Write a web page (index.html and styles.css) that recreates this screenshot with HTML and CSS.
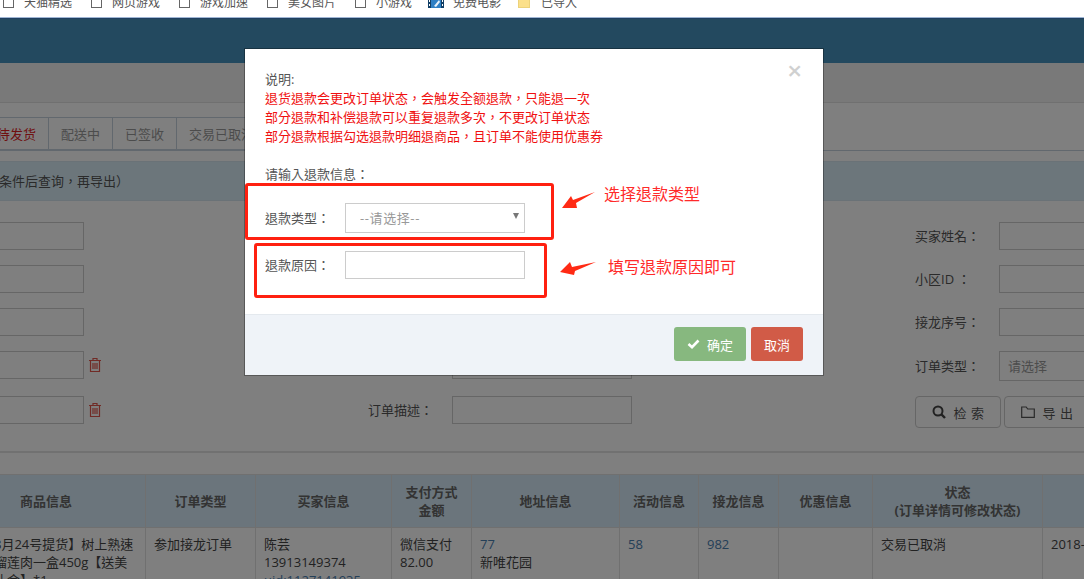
FILE: index.html
```html
<!DOCTYPE html>
<html lang="zh-Hant">

<head>
    <meta charset="UTF-8">
    <title>订单管理</title>
    <link rel="stylesheet" href="styles.css">
</head>

<body>
    <div class="bookmarks">
        <span class="bookmark"><i class="page-icon"></i>天猫精选</span>
        <span class="bookmark"><i class="page-icon"></i>网页游戏</span>
        <span class="bookmark"><i class="page-icon"></i>游戏加速</span>
        <span class="bookmark"><i class="page-icon"></i>美女图片</span>
        <span class="bookmark bookmark-short"><i class="page-icon"></i>小游戏</span>
        <span class="bookmark bookmark-film">
            <svg class="film-icon" width="16" height="9" viewBox="0 0 16 9">
                <rect width="16" height="9" fill="#123f66" />
                <rect x="3" y="0" width="10" height="9" fill="#2d7fc4" />
                <path d="M6 7 L11 1 L12 3 L8 8 Z" fill="#e8f2fa" />
                <path d="M1 1h1v2H1zM1 5h1v2H1zM14 1h1v2h-1zM14 5h1v2h-1z" fill="#fff" />
            </svg>免费电影
        </span>
        <span class="bookmark"><i class="folder-icon"></i>已导入</span>
    </div>

    <div class="app">
        <header class="topbar"></header>
        <div class="breadcrumb"></div>

        <div class="tabs">
            <a class="tab tab-active">待发货</a>
            <a class="tab">配送中</a>
            <a class="tab">已签收</a>
            <a class="tab">交易已取消</a>
        </div>

        <div class="panel-title"><span>（请选择筛选条件后查询，再导出）</span></div>

        <div class="filter">
            <div class="left-field"><input class="field left-input" type="text"></div>
            <label class="field-label"></label>
            <input class="field" type="text">
            <span></span>
            <label class="field-label">买家姓名：</label>
            <input class="field" type="text">

            <div class="left-field"><input class="field left-input" type="text"></div>
            <label class="field-label"></label>
            <input class="field" type="text">
            <span></span>
            <label class="field-label">小区ID ：</label>
            <input class="field" type="text">

            <div class="left-field"><input class="field left-input" type="text"></div>
            <label class="field-label"></label>
            <input class="field" type="text">
            <span></span>
            <label class="field-label">接龙序号：</label>
            <input class="field" type="text">

            <div class="left-field">
                <input class="field left-input" type="text">
                <svg class="trash" width="14" height="16" viewBox="0 0 14 16">
                    <path d="M1 3.5h12M2.5 3.5v11h9v-11M5 3.5V1.5h4v2M5 6v6M7 6v6M9 6v6" fill="none" stroke="#e2574c" stroke-width="1.2" />
                </svg>
            </div>
            <label class="field-label"></label>
            <input class="field" type="text">
            <span></span>
            <label class="field-label field-label-tall">订单类型：</label>
            <input class="field field-tall" type="text" placeholder="请选择">

            <div class="left-field">
                <input class="field left-input" type="text">
                <svg class="trash" width="14" height="16" viewBox="0 0 14 16">
                    <path d="M1 3.5h12M2.5 3.5v11h9v-11M5 3.5V1.5h4v2M5 6v6M7 6v6M9 6v6" fill="none" stroke="#e2574c" stroke-width="1.2" />
                </svg>
            </div>
            <label class="field-label">订单描述：</label>
            <input class="field" type="text">
            <span></span>
            <div class="filter-buttons">
                <button class="btn-plain" type="button">
                    <svg width="14" height="14" viewBox="0 0 14 14">
                        <circle cx="6" cy="6" r="4.5" fill="none" stroke="#444" stroke-width="2" />
                        <path d="M9.2 9.2 L13 13" stroke="#444" stroke-width="2.4" />
                    </svg>
                    检 索
                </button>
                <button class="btn-plain" type="button">
                    <svg width="14" height="12" viewBox="0 0 14 12">
                        <path d="M.7 11.3V1h4.5l1.5 2h6.6v8.3z" fill="none" stroke="#555" stroke-width="1.2" />
                    </svg>
                    导 出
                </button>
            </div>
        </div>

        <div class="table-wrap">
            <table class="orders">
                <colgroup>
                    <col class="c-goods">
                    <col class="c-type">
                    <col class="c-buyer">
                    <col class="c-pay">
                    <col class="c-addr">
                    <col class="c-act">
                    <col class="c-chain">
                    <col class="c-coupon">
                    <col class="c-status">
                    <col class="c-time">
                </colgroup>
                <thead>
                    <tr>
                        <th>商品信息</th>
                        <th>订单类型</th>
                        <th>买家信息</th>
                        <th>支付方式<br>金额</th>
                        <th>地址信息</th>
                        <th>活动信息</th>
                        <th>接龙信息</th>
                        <th>优惠信息</th>
                        <th>状态<br>(订单详情可修改状态)</th>
                        <th>下单时间</th>
                    </tr>
                </thead>
                <tbody>
                    <tr>
                        <td>预售【8月24号提货】树上熟速<br>冻金枕榴莲肉一盒450g【送美<br>食饼干礼金】*1</td>
                        <td>参加接龙订单</td>
                        <td>陈芸<br>13913149374<br><a>uid:1127141935</a></td>
                        <td>微信支付<br>82.00</td>
                        <td><a>77</a><br>新唯花园</td>
                        <td><a>58</a></td>
                        <td><a>982</a></td>
                        <td></td>
                        <td>交易已取消</td>
                        <td>2018-08-20 10:15</td>
                    </tr>
                </tbody>
            </table>
        </div>

        <div class="backdrop"></div>
    </div>

    <div class="modal">
        <div class="modal-body">
            <span class="modal-close">×</span>
            <p class="note">说明:</p>
            <p class="note note-red">退货退款会更改订单状态，会触发全额退款，只能退一次</p>
            <p class="note note-red">部分退款和补偿退款可以重复退款多次，不更改订单状态</p>
            <p class="note note-red">部分退款根据勾选退款明细退商品，且订单不能使用优惠券</p>
            <p class="note note-gap">请输入退款信息：</p>
            <div class="modal-row modal-row-first">
                <label class="modal-label">退款类型：</label>
                <div class="select-wrap">
                    <select class="modal-select">
                        <option>--请选择--</option>
                    </select>
                </div>
            </div>
            <div class="modal-row">
                <label class="modal-label">退款原因：</label>
                <input class="modal-input" type="text">
            </div>
        </div>
        <div class="modal-footer">
            <button class="btn btn-ok" type="button">
                <svg width="13" height="10" viewBox="0 0 13 10">
                    <path d="M1.5 5 L5 8.2 L11.5 1.5" fill="none" stroke="#fff" stroke-width="2.6" />
                </svg>
                确定
            </button>
            <button class="btn btn-cancel" type="button">取消</button>
        </div>
    </div>

    <!-- 红色标注 -->
    <div class="mark mark-type"></div>
    <div class="mark mark-reason"></div>
    <svg class="mark-arrows" width="1084" height="579" viewBox="0 0 1084 579">
        <path d="M562 208 L571 196 L573 200 L595 192 L576 203 L577 208 Z" fill="#ff2a14" />
        <path d="M560 272 L570 262 L572 267 L596 262 L575 271 L574 275 Z" fill="#ff2a14" />
    </svg>
    <span class="mark-text mark-text-type">选择退款类型</span>
    <span class="mark-text mark-text-reason">填写退款原因即可</span>
</body>

</html>
```

FILE: styles.css
```css
* {
    box-sizing: border-box;
}

html,
body {
    height: 100%;
}

body {
    position: relative;
    height: 579px;
    margin: 0;
    overflow: hidden;
    background-color: #fff;
    font-family: "Open Sans", "Noto Sans CJK TC", sans-serif;
    font-size: 13px;
    color: #444;
}

/* 浏览器书签栏 */
.bookmarks {
    display: flex;
    height: 18px;
    padding-left: 3px;
    overflow: hidden;
    background-color: #fff;
    border-bottom: 1px solid #9fb6d4;
    font-size: 12px;
    line-height: 14px;
    color: #555;
}

.bookmark {
    display: flex;
    flex: none;
    width: 88px;
    margin-top: -4px;
    white-space: nowrap;
}

.bookmark-short {
    width: 73px;
}

.bookmark-film {
    width: 90px;
}

.page-icon {
    flex: none;
    width: 11px;
    height: 12px;
    margin-right: 10px;
    background-color: #fff;
    border: 1px solid #666;
}

.film-icon {
    flex: none;
    margin: 3px 9px 0 0;
}

.folder-icon {
    flex: none;
    width: 12px;
    height: 12px;
    margin-right: 11px;
    background-color: #fbe08a;
    border: 1px solid #ecd27a;
}

/* 页面主体 */
.app {
    position: relative;
    height: 561px;
    overflow: hidden;
}

.topbar {
    height: 45px;
    background-color: #4692be;
    border-top: 1px solid #3f7fc0;
}

.breadcrumb {
    height: 40px;
    background-color: #f3f3f3;
    border-bottom: 1px solid #e0e0e0;
}

.tabs {
    display: flex;
    height: 48px;
    margin-left: -15px;
    padding-top: 14px;
    border-bottom: 1px solid #c5d0dc;
}

.tab {
    padding: 0 12px;
    border: 1px solid #c5d0dc;
    border-left: 0;
    line-height: 32px;
    color: #999;
    white-space: nowrap;
}

.tab-active {
    color: #e02020;
}

.panel-title {
    height: 40px;
    margin-top: 10px;
    overflow: hidden;
    background-color: #d9edf7;
    border: 1px solid #d4e4ee;
    border-width: 1px 0;
    line-height: 38px;
    color: #555;
}

.panel-title span {
    margin-left: -79px;
}

.filter {
    display: grid;
    grid-template-columns: 368px 84px 180px 283px 84px 180px;
    row-gap: 15px;
    align-content: start;
    align-items: start;
    height: 252px;
    padding-top: 21px;
    border-bottom: 2px solid #e2e2e2;
}

.left-field {
    display: flex;
    align-items: center;
    height: 28px;
}

.left-input {
    flex: none;
    margin-left: -96px;
}

.trash {
    margin-left: 4px;
}

.field {
    width: 180px;
    height: 28px;
    padding: 0 8px;
    border: 1px solid #ccc;
    background-color: #fff;
    font: inherit;
}

.field-tall {
    height: 30px;
}

.field::placeholder {
    color: #999;
}

.field-label {
    line-height: 28px;
    color: #555;
    white-space: nowrap;
}

.field-label-tall {
    line-height: 30px;
}

.filter-buttons {
    display: flex;
    grid-column: 5 / 7;
    gap: 3px;
}

.btn-plain {
    display: flex;
    flex: none;
    align-items: center;
    justify-content: center;
    gap: 8px;
    width: 86px;
    height: 32px;
    padding: 0;
    background-color: #fff;
    border: 1px solid #ccc;
    border-radius: 4px;
    font: inherit;
    letter-spacing: 0.5px;
    color: #555;
}

.table-wrap {
    margin: 21px 0 0 -54px;
}

.orders {
    width: 1246px;
    table-layout: fixed;
    border-collapse: collapse;
    line-height: 18px;
}

.c-goods { width: 199px; }
.c-type { width: 110px; }
.c-buyer { width: 136px; }
.c-pay { width: 80px; }
.c-addr { width: 148px; }
.c-act { width: 79px; }
.c-chain { width: 80px; }
.c-coupon { width: 94px; }
.c-status { width: 170px; }
.c-time { width: 150px; }

.orders th,
.orders td {
    border: 1px solid #e0e0e0;
}

.orders th {
    height: 53px;
    padding: 0 4px;
    background-color: #d6ebf8;
    text-align: center;
    color: #666;
    white-space: nowrap;
}

.orders td {
    height: 120px;
    padding: 7px 8px;
    vertical-align: top;
    white-space: nowrap;
}

.orders a {
    color: #4a80b0;
}

.backdrop {
    position: absolute;
    top: 0;
    right: 0;
    bottom: 0;
    left: 0;
    background-color: rgba(0, 0, 0, 0.5);
}

/* 退款弹窗 */
.modal {
    position: absolute;
    top: 49px;
    left: 245px;
    width: 578px;
    height: 326px;
    display: flex;
    flex-direction: column;
    background-color: #fff;
    box-shadow: 0 0 0 1px rgba(0, 0, 0, 0.3);
}

.modal-body {
    position: relative;
    flex: 1;
    padding: 21px 20px 0;
}

.modal-close {
    position: absolute;
    top: 6px;
    right: 21px;
    font-size: 26px;
    line-height: 30px;
    font-weight: 600;
    color: #d0d0d0;
}

.note {
    margin: 0;
    line-height: 19px;
    color: #555;
}

.note-red {
    color: #f01010;
}

.note-gap {
    margin-top: 19px;
}

.modal-row {
    display: flex;
    align-items: center;
    margin-top: 18px;
}

.modal-row-first {
    margin-top: 19px;
}

.modal-label {
    flex: none;
    width: 80px;
    padding-bottom: 2px;
    color: #555;
}

.select-wrap {
    position: relative;
    width: 180px;
    height: 30px;
}

.select-wrap::after {
    content: "";
    position: absolute;
    top: 10px;
    right: 6px;
    border: 3.5px solid transparent;
    border-top: 6px solid #777;
    border-bottom: 0;
}

.modal-select {
    width: 100%;
    height: 100%;
    padding-left: 14px;
    appearance: none;
    background-color: #fff;
    border: 1px solid #ccc;
    border-radius: 0;
    font: inherit;
    letter-spacing: 0.6px;
    color: #999;
}

.modal-input {
    width: 180px;
    height: 28px;
    background-color: #fff;
    border: 1px solid #ccc;
}

.modal-footer {
    display: flex;
    justify-content: flex-end;
    gap: 5px;
    height: 61px;
    padding: 12px 20px 0;
    background-color: #eff3f8;
    border-top: 1px solid #e4e9ee;
}

.btn {
    display: flex;
    align-items: center;
    justify-content: center;
    gap: 7px;
    height: 34px;
    padding: 0;
    border: 0;
    border-radius: 3px;
    font: inherit;
    color: #fff;
}

.btn-ok {
    width: 72px;
    background-color: #87b87f;
}

.btn-cancel {
    width: 52px;
    background-color: #d15b47;
}

/* 红色标注 */
.mark {
    position: absolute;
    border: 3px solid #ff2010;
    border-radius: 3px;
}

.mark-type {
    top: 183px;
    left: 245px;
    width: 309px;
    height: 57px;
}

.mark-reason {
    top: 243px;
    left: 254px;
    width: 293px;
    height: 55px;
}

.mark-arrows {
    position: absolute;
    top: 0;
    left: 0;
}

.mark-text {
    position: absolute;
    font-size: 16px;
    line-height: 22px;
    color: #ff2a2a;
    white-space: nowrap;
}

.mark-text-type {
    top: 183px;
    left: 604px;
}

.mark-text-reason {
    top: 256px;
    left: 608px;
}
```
